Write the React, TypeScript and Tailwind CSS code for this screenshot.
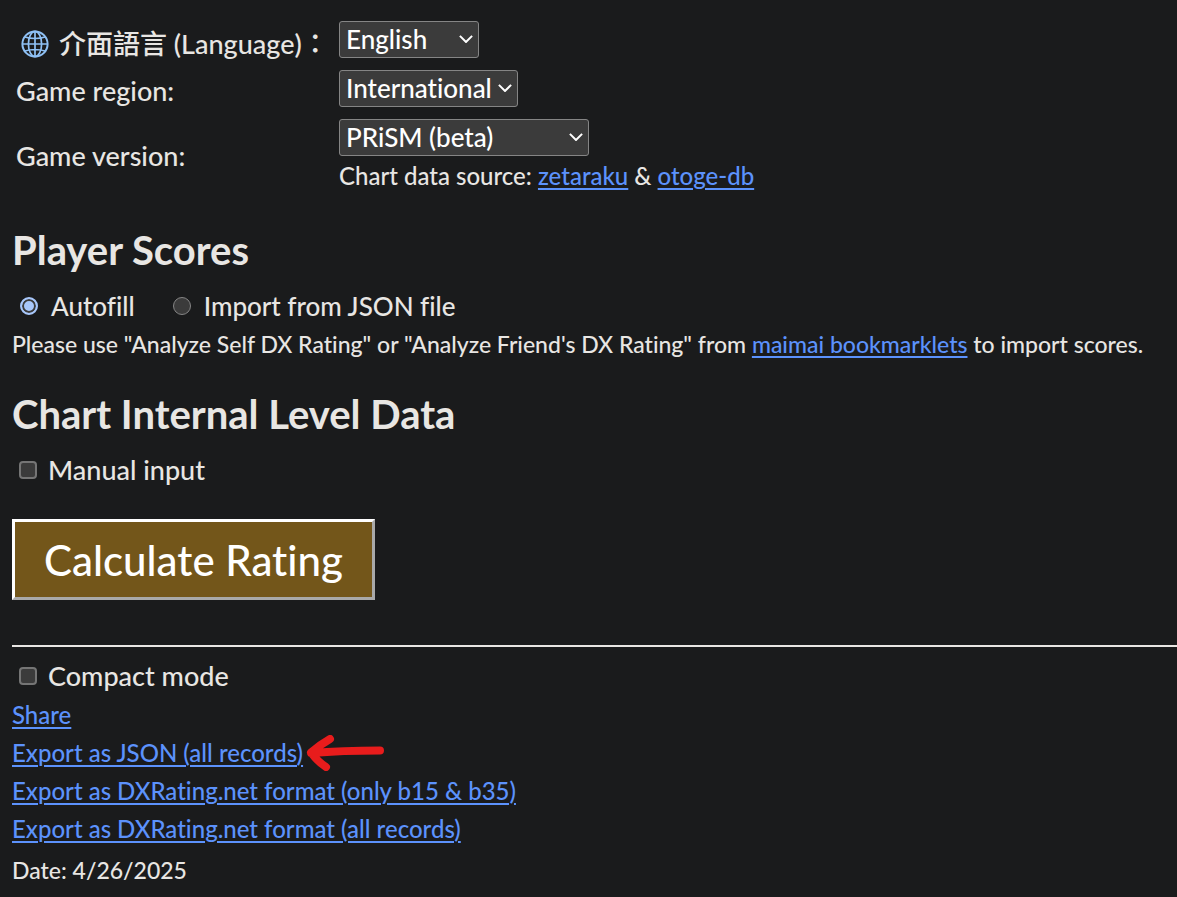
import React, { useState } from "react";

const link =
  "text-[#5c92fc] underline decoration-2 underline-offset-[3px] decoration-[#5c92fc]";

function GlobeIcon() {
  return (
    <svg
      className="h-7 w-7 shrink-0"
      viewBox="0 0 28 28"
      fill="none"
      stroke="#8fc1f5"
      strokeWidth="1.7"
      aria-hidden="true"
    >
      <circle cx="14" cy="14" r="12.6" strokeWidth="2" />
      <ellipse cx="14" cy="14" rx="6.6" ry="12.6" />
      <path d="M14 1.4v25.2M1.4 14h25.2M4 7c3 1 6.500 1.500 10 1.500S21 8 24 7M4 21c3-1 6.500-1.500 10-1.500S21 20 24 21" />
    </svg>
  );
}

function Select({
  id,
  options,
  width,
}: {
  id: string;
  options: string[];
  width: string;
}) {
  return (
    <div className={`relative ${width}`}>
      <select
        id={id}
        className="block h-[37px] w-full appearance-none rounded-[3px] border border-[#858585] bg-[#3b3b3b] pl-[6px] pr-5 text-[26px] font-medium leading-[35px] text-white"
      >
        {options.map((o) => (
          <option key={o}>{o}</option>
        ))}
      </select>
      <svg
        className="pointer-events-none absolute right-[6px] top-[14px] h-2 w-[14px]"
        viewBox="0 0 14 8"
        fill="none"
        stroke="#fff"
        strokeWidth="2"
        aria-hidden="true"
      >
        <path d="M0.900 0.900 7 7 13.100 0.900" />
      </svg>
    </div>
  );
}

function Radio({
  label,
  checked,
  onChange,
}: {
  label: string;
  checked: boolean;
  onChange: () => void;
}) {
  return (
    <label className="flex items-center gap-[13px] text-[26px] leading-[38px]">
      <input
        type="radio"
        name="score-source"
        checked={checked}
        onChange={onChange}
        className="h-[18px] w-[18px] appearance-none rounded-full border border-[#858585] bg-[#3b3b3b] checked:border-2 checked:border-[#a8c7fa] checked:bg-[#a8c7fa] checked:shadow-[inset_0_0_0_2px_#3b3b3b]"
      />
      {label}
    </label>
  );
}

function Checkbox({ label }: { label: string }) {
  return (
    <label className="ml-[7px] flex w-fit items-center gap-[11px] text-[27px] leading-[38px]">
      <input
        type="checkbox"
        className="h-[18px] w-[18px] appearance-none rounded-[4px] border-2 border-[#757575] bg-[#3b3b3b] checked:bg-[#a8c7fa]"
      />
      {label}
    </label>
  );
}

function Arrow() {
  return (
    <svg
      className="h-9 w-[78px] shrink-0"
      viewBox="0 0 78 36"
      fill="none"
      stroke="#e81c1c"
      strokeWidth="8"
      strokeLinecap="round"
      strokeLinejoin="round"
      aria-hidden="true"
    >
      <path d="M74 15.500C52 15.500 30 16 5 18M24 4C17 8 9 14 5 17.500C9 23 14 28 20 32" />
    </svg>
  );
}

export default function App() {
  const [source, setSource] = useState("auto");
  return (
    <main className="min-h-screen overflow-x-hidden bg-[#1a1b1c] pb-[7px] pl-3 pt-[21px] font-['Lato','Noto_Sans_CJK_TC',sans-serif] text-2xl font-medium text-[#e8e6e3] [font-variant-ligatures:no-common-ligatures]">
      <div className="grid grid-cols-[315px_1fr] items-center gap-x-3 gap-y-3">
        <label
          htmlFor="language"
          className="flex h-[37px] items-center gap-[10px] whitespace-nowrap pl-[9px] pt-2 text-[27px] leading-[37px]"
        >
          <GlobeIcon />
          <span>介面語言 (Language)：</span>
        </label>
        <Select id="language" width="w-[140px]" options={["English", "繁體中文"]} />
        <label htmlFor="region" className="flex h-[37px] items-center pl-1 pt-1 text-[27px] leading-[37px]">
          Game region:
        </label>
        <Select id="region" width="w-[179px]" options={["International", "Japan"]} />
        <label htmlFor="version" className="pl-1 text-[27px] leading-[37px]">
          Game version:
        </label>
        <div>
          <Select id="version" width="w-[250px]" options={["PRiSM (beta)", "BUDDiES PLUS"]} />
          <p className="mt-1 leading-8">
            Chart data source:{" "}
            <a href="#zetaraku" className={link}>zetaraku</a> &amp;{" "}
            <a href="#otoge-db" className={link}>otoge-db</a>
          </p>
        </div>
      </div>

      <h2 className="mt-[34px] text-[40px] font-bold leading-[48px]">Player Scores</h2>
      <div className="ml-2 mt-[13px] flex gap-[38px]">
        <Radio label="Autofill" checked={source === "auto"} onChange={() => setSource("auto")} />
        <Radio
          label="Import from JSON file"
          checked={source === "json"}
          onChange={() => setSource("json")}
        />
      </div>
      <p className="text-[23px] leading-[38px]">
        Please use "Analyze Self DX Rating" or "Analyze Friend's DX Rating" from{" "}
        <a href="#bookmarklets" className={link}>maimai bookmarklets</a> to import scores.
      </p>

      <h2 className="mt-[27px] text-[40px] font-bold leading-[48px]">Chart Internal Level Data</h2>
      <div className="mt-[13px]">
        <Checkbox label="Manual input" />
      </div>

      <button
        type="button"
        className="mt-[30px] block h-[81px] border-[3px] border-b-[#a9a9a9] border-l-white border-r-[#a9a9a9] border-t-white bg-[#73561a] px-[29px] text-[42px] leading-[60px] text-white"
      >
        Calculate Rating
      </button>

      <hr className="mb-[10px] mt-[45px] border-t-2 border-[#e8e6e3]" />
      <Checkbox label="Compact mode" />
      <ul className="mt-[1px] leading-[38px]">
        <li><a href="#share" className={link}>Share</a></li>
        <li className="flex h-[38px] items-center gap-[3px]">
          <a href="#json" className={link}>Export as JSON (all records)</a>
          <Arrow />
        </li>
        <li><a href="#dxrating-best" className={link}>Export as DXRating.net format (only b15 &amp; b35)</a></li>
        <li><a href="#dxrating-all" className={link}>Export as DXRating.net format (all records)</a></li>
      </ul>
      <p className="mt-[3px] text-[23px] leading-[38px]">Date: 4/26/2025</p>
    </main>
  );
}
